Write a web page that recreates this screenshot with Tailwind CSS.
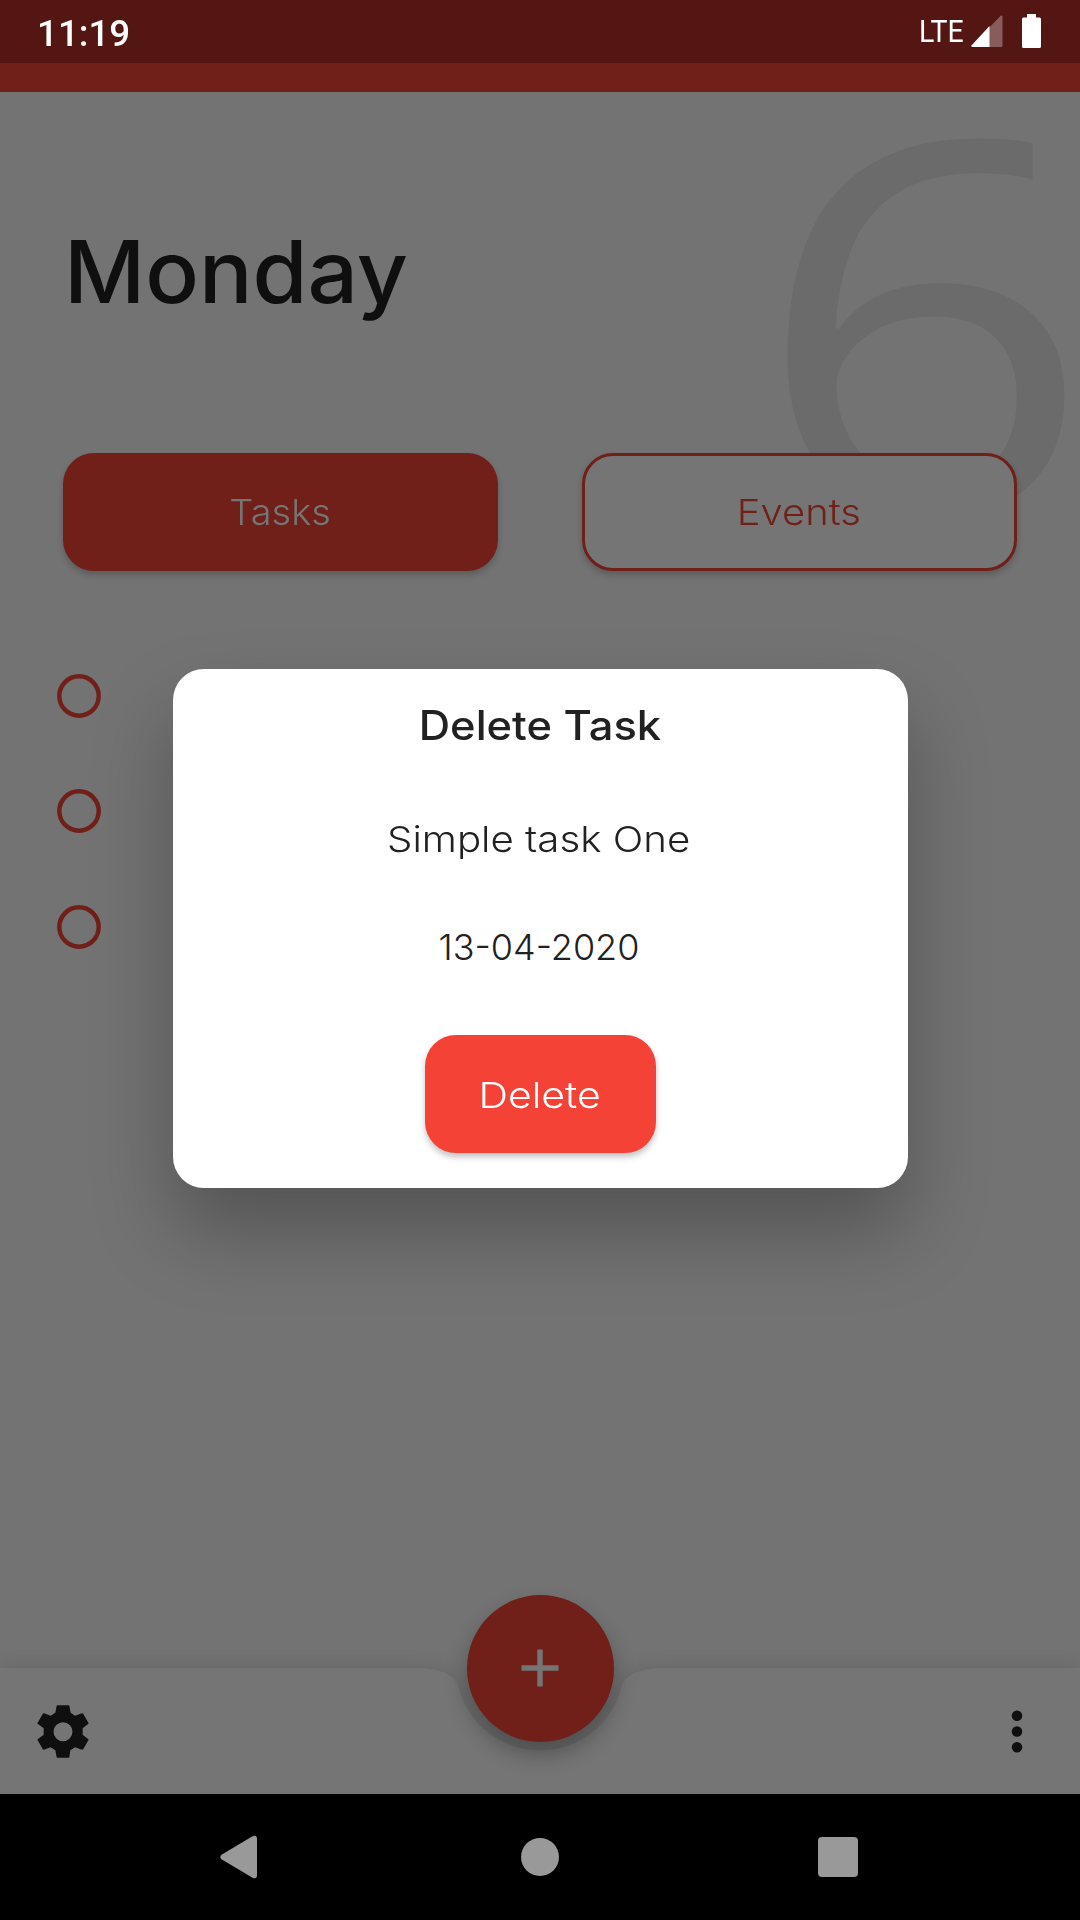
<!DOCTYPE html>
<html lang="en">
<head>
<meta charset="utf-8">
<title>Tasks</title>
<script src="https://cdn.jsdelivr.net/npm/@tailwindcss/browser@4"></script>
</head>
<body class="w-[1080px] h-[1920px] overflow-hidden bg-black font-['Inter',sans-serif]">
<div class="relative w-[1080px] h-[1920px] flex flex-col bg-[#737373] overflow-hidden">

  <!-- Status bar -->
  <header class="relative z-10 shrink-0 h-[92px] bg-[#701f19]">
    <div class="h-[63px] bg-[#541613] flex items-start justify-between pl-[37px] pr-[39px] text-white font-['Roboto',sans-serif]">
      <span class="mt-[9px] h-[48px] leading-[48px] text-[37.500px] font-medium origin-left scale-x-[0.98]">11:19</span>
      <div class="flex items-start">
        <span class="mt-[10px] h-[42px] leading-[42px] w-[52px] text-[32px] origin-left scale-x-[0.89]">LTE</span>
        <svg class="mt-[15px] mr-[19px]" width="32" height="32" viewBox="0 0 32 32"><path d="M30 .5Q31.500 0 31.500 1.500V30.500Q31.500 32 30 32H1Q0 31.500 .5 30.500Z" fill="#fff" fill-opacity=".3"/><path d="M18.500 11V32H1Q0 31.500 .5 30.500Z" fill="#fff"/></svg>
        <svg class="mt-[14px]" width="19" height="34" viewBox="0 0 19 34"><path d="M5 0h9v3.500h3.500q1.500 0 1.500 1.500v27.500q0 1.500-1.500 1.500h-16Q0 34 0 32.500V5q0-1.500 1.500-1.500H5z" fill="#fff"/></svg>
      </div>
    </div>
  </header>

  <!-- Day heading with oversized date -->
  <div class="absolute left-[754px] top-[33px] h-[560px] leading-[560px] text-[520px] font-[370] text-[#6b6b6b] font-['Open_Sans',sans-serif] origin-left scale-x-[1.14]">6</div>
  <h1 class="relative mt-[130px] ml-[64px] h-[100px] leading-[100px] text-[86px] font-medium text-[#0f0f0f] origin-left scale-x-[1.035]">Monday</h1>

  <!-- Tabs -->
  <div class="relative mt-[130.500px] px-[63px] flex justify-between">
    <button class="w-[435px] h-[118px] rounded-[31px] bg-[#701f19] text-[#757575] text-[36px] font-light shadow-[0_4px_6px_rgba(0,0,0,0.2)]"><span class="inline-block pt-px scale-x-[1.055]">Tasks</span></button>
    <button class="w-[435px] h-[118px] rounded-[31px] bg-[#757575] border-[3px] border-[#701f19] text-[#701f19] text-[36px] font-light shadow-[0_4px_6px_rgba(0,0,0,0.2)]"><span class="inline-block pt-px pr-px scale-x-[1.11]">Events</span></button>
  </div>

  <!-- Task check circles -->
  <div class="mt-[103px] ml-[56.500px] flex flex-col gap-[71.500px]">
    <svg width="44" height="44" viewBox="0 0 44 44"><circle cx="22" cy="22" r="19.700" fill="none" stroke="#701f19" stroke-width="4.400"/></svg>
    <svg width="44" height="44" viewBox="0 0 44 44"><circle cx="22" cy="22" r="19.700" fill="none" stroke="#701f19" stroke-width="4.400"/></svg>
    <svg width="44" height="44" viewBox="0 0 44 44"><circle cx="22" cy="22" r="19.700" fill="none" stroke="#701f19" stroke-width="4.400"/></svg>
  </div>

  <!-- Bottom app bar -->
  <div class="mt-auto relative shrink-0 h-[126px] flex items-center justify-between px-[37px]">
    <svg class="absolute left-0 bottom-0 overflow-visible drop-shadow-[0_-3px_8px_rgba(0,0,0,0.1)]" width="1080" height="126" viewBox="0 0 1080 126"><path d="M0 0H414Q453.400 0 458.700 19.500A84 84 0 0 0 621.300 19.500Q626.600 0 666 0H1080V126H0Z" fill="#757575"/></svg>
    <svg class="relative" width="52" height="53" viewBox="111 194.500 156 159"><path fill-rule="evenodd" fill="#0f0f0f" d="M172 195H206L208 197 212 218 225 227 246 219 249 220 266 249 265 251 248 264V284L265 297 266 299 249 328 246 329 225 321 211 330 208 351 206 353H172L170 351 166 330 152 321 132 329 129 328 112 299 113 297 131 284V264L113 251 112 249 129 220 132 219 152 227 166 218 170 197ZM189 246a28.500 28.500 0 1 0 0 57a28.500 28.500 0 1 0 0-57Z"/></svg>
    <svg class="relative mr-[20px]" width="12" height="44" viewBox="0 0 12 44" fill="#0f0f0f"><circle cx="6" cy="6.700" r="5.250"/><circle cx="6" cy="22.500" r="5.250"/><circle cx="6" cy="38.200" r="5.250"/></svg>
    <button class="absolute left-[466.500px] top-[-73.500px] size-[147px] rounded-full bg-[#701f19] flex items-center justify-center shadow-[0_12px_22px_rgba(0,0,0,0.3)]">
      <svg width="38" height="38" viewBox="0 0 38 38"><path d="M16.300 .5h5.400v15.800h15.800v5.400H21.700v15.800h-5.400V21.700H.5v-5.400h15.800z" fill="#757575"/></svg>
    </button>
  </div>

  <!-- System navigation -->
  <nav class="relative shrink-0 h-[126px] bg-black flex items-center justify-between pl-[220px] pr-[222px]">
    <svg width="38" height="44" viewBox="0 0 38 44"><path d="M32.500 1.300Q37 -.5 37 4V40Q37 44.500 32.500 42.700L1.500 24.300Q-1 22 1.500 19.700Z" fill="#999"/></svg>
    <span class="size-[38px] ml-[3px] rounded-full bg-[#999]"></span>
    <span class="size-[40px] rounded-[4px] bg-[#999]"></span>
  </nav>

  <!-- Delete dialog -->
  <div class="absolute inset-0 z-20 flex items-start justify-center pt-[668.500px]">
    <section class="w-[735px] h-[519.500px] rounded-[31px] bg-white flex flex-col items-center text-[#212121] text-[36px] font-light shadow-[0_44px_80px_rgba(0,0,0,0.27)]">
      <h2 class="mt-[32.500px] h-[50px] leading-[50px] text-[40.500px] font-medium scale-x-[1.073]">Delete Task</h2>
      <p class="mt-[65.500px] pr-[2px] h-[44px] leading-[44px] scale-x-[1.117]">Simple task One</p>
      <p class="mt-[64px] pr-[2px] h-[44px] leading-[44px]">13-04-2020</p>
      <button class="mt-[66.500px] w-[231px] h-[118px] rounded-[31px] bg-[#f44336] text-white shadow-[0_4px_6px_rgba(0,0,0,0.24)]"><span class="inline-block pt-px pr-px scale-x-[1.14]">Delete</span></button>
    </section>
  </div>
</div>
</body>
</html>
